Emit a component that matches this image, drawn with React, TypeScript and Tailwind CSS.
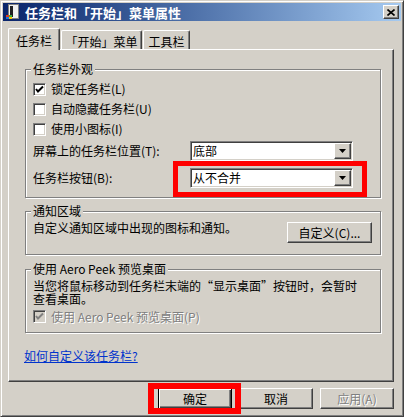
const raised =
  "border border-t-white border-l-white border-r-[#404040] border-b-[#404040] shadow-[inset_-1px_-1px_0_#808080] bg-[#d4d0c8]";
const sunken =
  "border border-t-[#808080] border-l-[#808080] border-r-white border-b-white shadow-[inset_1px_1px_0_#404040,inset_-1px_-1px_0_#d4d0c8]";

function Check({ color = "#000" }: { color?: string }) {
  return (
    <svg width="11" height="11" viewBox="0 0 11 11">
      <polyline points="2,5 4,7.5 9,2.5" fill="none" stroke={color} strokeWidth="2" />
    </svg>
  );
}

function CheckBox({ checked, disabled }: { checked?: boolean; disabled?: boolean }) {
  return (
    <span
      className={`${sunken} flex items-center justify-center w-[13px] h-[13px] shrink-0 ${
        disabled ? "bg-[#d4d0c8]" : "bg-white"
      }`}
    >
      {checked && <Check color={disabled ? "#808080" : "#000"} />}
    </span>
  );
}

function Combo({ value }: { value: string }) {
  return (
    <div className={`${sunken} flex items-stretch w-[163px] h-[20px] p-[1px] bg-white`}>
      <span className="flex-1 pl-[1px] flex items-center leading-[12px]">{value}</span>
      <span className={`${raised} w-[17px] flex items-center justify-center`}>
        <svg width="7" height="4" viewBox="0 0 7 4">
          <polygon points="0,0 7,0 3.5,4" fill="#000" />
        </svg>
      </span>
    </div>
  );
}

function Group({ title, className, children }: { title: string; className?: string; children: React.ReactNode }) {
  return (
    <fieldset
      className={`border border-[#808080] shadow-[inset_1px_1px_0_#fff,1px_1px_0_#fff] min-w-0 ${className ?? ""}`}
    >
      <legend className="-ml-[2px] px-[2px] leading-[12px] bg-[#d4d0c8] whitespace-nowrap">{title}</legend>
      {children}
    </fieldset>
  );
}

export default function App() {
  return (
    <div className="w-[404px] h-[417px] bg-[#d4d0c8] border border-t-[#d4d0c8] border-l-[#d4d0c8] border-r-[#404040] border-b-[#404040] shadow-[inset_1px_1px_0_#fff,inset_-1px_-1px_0_#808080] p-[2px] text-[12px] leading-[12px] text-black font-['Noto_Sans_CJK_SC',sans-serif] overflow-hidden" lang="zh-CN">
      {/* title bar */}
      <div className="h-[18px] flex items-center bg-gradient-to-r from-[#0a246a] to-[#a6caf0] pl-[2px] pr-[2px]">
        <svg width="16" height="16" viewBox="0 0 16 16" className="shrink-0">
          <rect x="3.5" y="0.5" width="10" height="14" fill="#f0f0f0" stroke="#808080" />
          <rect x="5" y="2" width="3" height="11" fill="#202020" />
          <rect x="1" y="11" width="3" height="2" fill="#e03a1e" />
          <rect x="4" y="11" width="3" height="2" fill="#3cb043" />
          <rect x="1" y="13" width="3" height="2" fill="#1e70e0" />
          <rect x="4" y="13" width="3" height="2" fill="#f5c400" />
        </svg>
        <span className="ml-[4px] text-white font-bold text-[13px] leading-[13px] whitespace-nowrap">
          任务栏和「开始」菜单属性
        </span>
        <span className={`${raised} ml-auto w-[16px] h-[14px] flex items-center justify-center`}>
          <svg width="8" height="7" viewBox="0 0 8 7">
            <path d="M0.5 0.5 L7.5 6.5 M7.5 0.5 L0.5 6.5" stroke="#000" strokeWidth="1.6" />
          </svg>
        </span>
      </div>

      <div className="pl-[5px] pt-[6px]">
        {/* tabs */}
        <div className="flex items-end h-[22px]">
          <div className="relative z-10 -mb-[1px] w-[52px] h-[22px] pt-[6px] text-center bg-[#d4d0c8] border-t border-l border-r border-t-white border-l-white border-r-[#404040] rounded-t-[2px] shadow-[inset_-1px_0_0_#808080]">
            任务栏
          </div>
          <div className="ml-[1px] w-[81px] h-[19px] pt-[5px] text-center border-t border-l border-r border-t-white border-l-white border-r-[#404040] rounded-t-[2px] shadow-[inset_-1px_0_0_#808080] whitespace-nowrap">
            「开始」菜单
          </div>
          <div className="ml-[1px] w-[47px] h-[19px] pt-[5px] text-center border-t border-l border-r border-t-white border-l-white border-r-[#404040] rounded-t-[2px] shadow-[inset_-1px_0_0_#808080]">
            工具栏
          </div>
        </div>

        {/* panel */}
        <div className="w-[386px] h-[333px] pl-[16px] pr-[12px] pt-[13px] border border-t-white border-l-white border-r-[#404040] border-b-[#404040] shadow-[inset_-1px_-1px_0_#808080]">
          <Group title="任务栏外观" className="pl-[7px] pr-[27px] pt-[4px] pb-[9px]">
            {[
              ["锁定任务栏(L)", true],
              ["自动隐藏任务栏(U)", false],
              ["使用小图标(I)", false],
            ].map(([label, checked]) => (
              <div key={label as string} className="h-[20px] flex items-center gap-[5px]">
                <CheckBox checked={checked as boolean} />
                <span>{label}</span>
              </div>
            ))}
            <div className="mt-[2px] flex items-center">
              <span className="w-[157px]">屏幕上的任务栏位置(T):</span>
              <Combo value="底部" />
            </div>
            <div className="mt-[7px] flex items-center">
              <span className="w-[157px]">任务栏按钮(B):</span>
              <div className="relative">
                <Combo value="从不合并" />
                <div className="absolute -left-[17px] -right-[14px] -top-[7px] -bottom-[9px] border-[5px] border-[#ff0000]" />
              </div>
            </div>
          </Group>

          <Group title="通知区域" className="mt-[7px] pl-[7px] pr-[8px] pt-[5px] pb-[11px]">
            <div className="flex items-start justify-between">
              <span>自定义通知区域中出现的图标和通知。</span>
              <button className={`${raised} w-[85px] h-[21px] leading-[12px]`}>自定义(C)...</button>
            </div>
          </Group>

          <Group title="使用 Aero Peek 预览桌面" className="mt-[8px] pl-[7px] pr-[7px] pt-[4px] pb-[9px]">
            <p className="whitespace-nowrap leading-[13px]">
              当您将鼠标移动到任务栏末端的“显示桌面”按钮时，会暂时
              <br />
              查看桌面。
            </p>
            <div className="mt-[5px] h-[13px] flex items-center gap-[5px]">
              <CheckBox checked disabled />
              <span className="text-[#808080] [text-shadow:1px_1px_0_#fff]">使用 Aero Peek 预览桌面(P)</span>
            </div>
          </Group>

          <a href="#" className="block mt-[17px] -ml-[1px] text-[#0033cc] underline">
            如何自定义该任务栏?
          </a>
        </div>

        {/* buttons */}
        <div className="w-[386px] mt-[6px] flex justify-end gap-[7px]">
          <div className="relative">
            <button className="w-[74px] h-[21px] bg-[#d4d0c8] border border-black shadow-[inset_1px_1px_0_#fff,inset_-1px_-1px_0_#404040,inset_-2px_-2px_0_#808080]">
              确定
            </button>
            <div className="absolute -left-[10px] -right-[9px] -top-[5px] -bottom-[5px] border-[6px] border-[#ff0000]" />
          </div>
          <button className={`${raised} w-[74px] h-[21px]`}>取消</button>
          <button className={`${raised} w-[74px] h-[21px] text-[#808080] [text-shadow:1px_1px_0_#fff]`}>应用(A)</button>
        </div>
      </div>
    </div>
  );
}
